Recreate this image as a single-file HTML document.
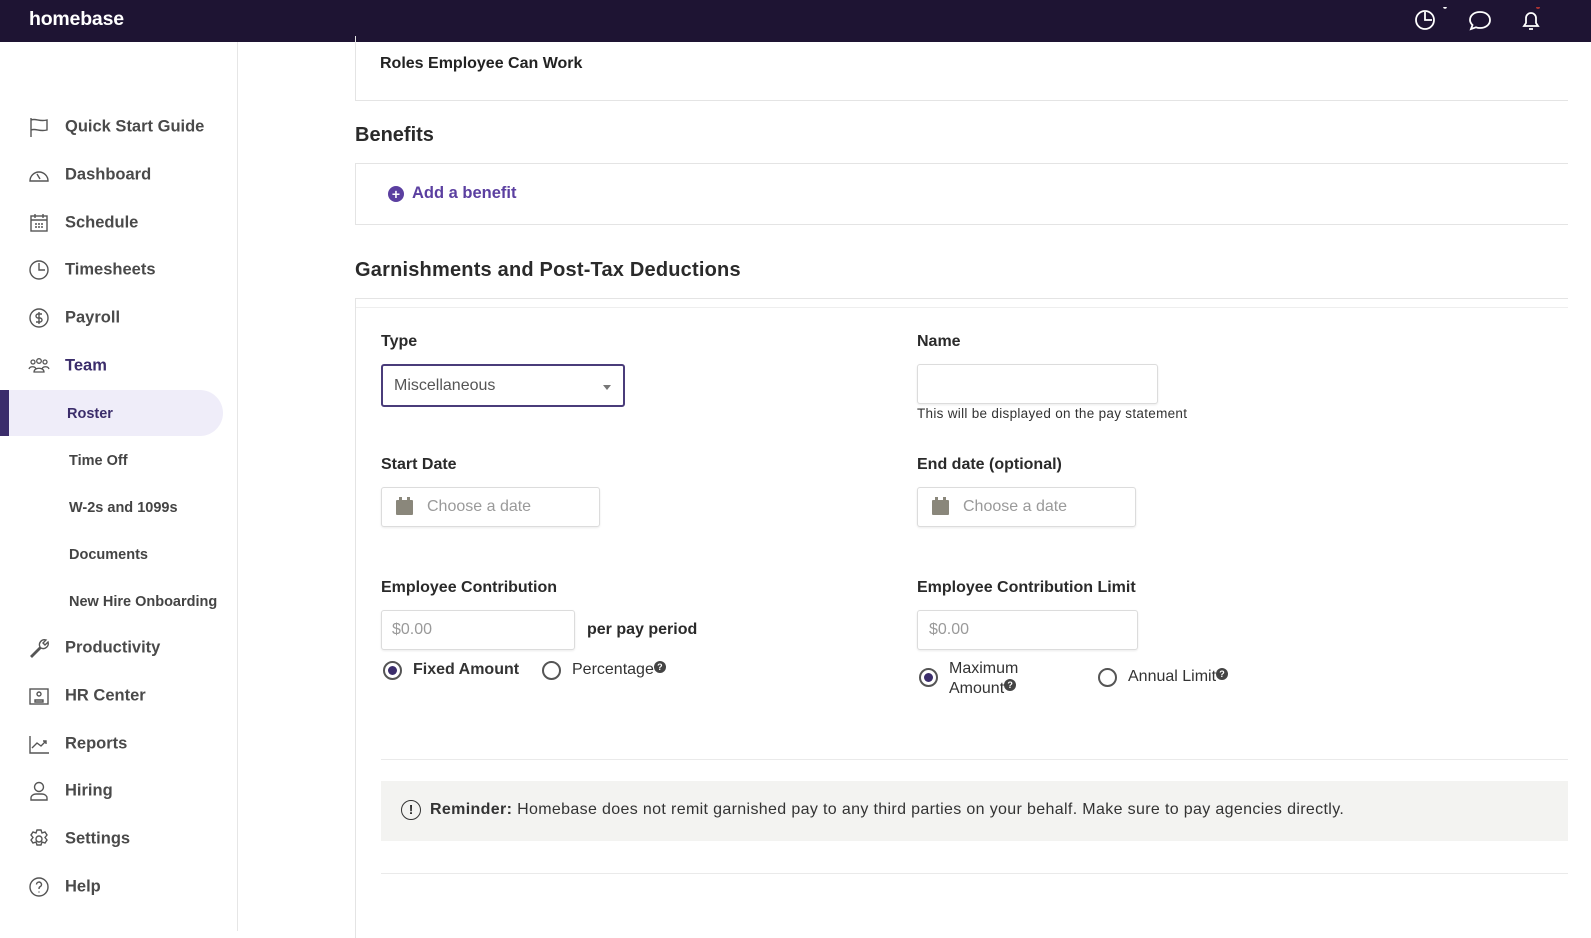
<!DOCTYPE html>
<html><head><meta charset="utf-8"><style>
*{box-sizing:border-box;margin:0;padding:0}
body{width:1591px;height:931px;overflow:hidden;background:#fff;font-family:"Liberation Sans",sans-serif;color:#222;position:relative}
.abs{position:absolute}
.top{left:0;top:0;width:1591px;height:42px;background:#1e1433}
.logo{left:29px;top:8px;color:#fff;font-size:19.5px;font-weight:bold;letter-spacing:-0.2px}
.side{left:0;top:42px;width:238px;height:889px;border-right:1px solid #e6e6e6}
.nav{left:65px;font-size:16.5px;font-weight:bold;color:#4a4a4a;transform:translateY(-50%)}
.ic{left:28px;width:22px;height:22px;transform:translateY(-50%)}
.sub{left:69px;font-size:14.5px;font-weight:bold;color:#444;transform:translateY(-50%)}
.lbl{font-size:16px;font-weight:bold;color:#2a2a2a}
.inp{border:1px solid #dcdcdc;border-radius:3px;background:#fff;box-shadow:0 1px 2px rgba(0,0,0,.08)}
.ph{color:#9a9a9a;font-size:16px}
.radio{width:19px;height:19px;border:2px solid #555;border-radius:50%;background:#fff}
.radio.on::after{content:"";position:absolute;left:3px;top:3px;width:9px;height:9px;border-radius:50%;background:#3b2d6b}
.q{display:inline-block;width:12px;height:12px;border-radius:50%;background:#444;color:#fff;font-size:9px;text-align:center;line-height:12px;vertical-align:top;font-weight:bold;letter-spacing:0}
.cal{width:17px;height:18px}
</style></head><body>
<div class="abs top"></div>
<div class="abs logo">homebase</div>
<svg class="abs" style="left:1413px;top:7px" width="130" height="28" viewBox="0 0 130 28" fill="none" stroke="#fff" stroke-width="1.8">
<circle cx="12" cy="13" r="9"/><path d="M12 5v8h7"/><circle cx="32" cy="0" r="1.8" fill="#fff" stroke="none"/>
<path d="M67 5c6 0 10 3.5 10 8s-4 8-10 8c-1.5 0-3-.3-4-.7L58 22l1.5-4c-1.5-1.4-2.5-3-2.5-5 0-4.5 4-8 10-8z"/>
<path d="M111 19h14l-2-3v-5a5 5 0 0 0-10 0v5zM116 22h4"/><circle cx="125" cy="0" r="2" fill="#a33" stroke="none"/>
</svg>
<div class="abs side"></div>
<div class="abs" style="left:0;top:390px;width:223px;height:46px;background:#efedf9;border-radius:0 23px 23px 0"></div>
<div class="abs" style="left:0;top:390px;width:9px;height:46px;background:#3b2d6b"></div>

<svg class="abs ic" style="top:127px" viewBox="0 0 22 22" fill="none" stroke="#555" stroke-width="1.4"><path d="M3 2v19M3 4c5-2 8 2 16 0v10c-8 2-11-2-16 0"/></svg>
<svg class="abs ic" style="top:175px" viewBox="0 0 22 22" fill="none" stroke="#555" stroke-width="1.4"><path d="M2 17a9 9 0 1 1 18 0zM9 10l3 5"/></svg>
<svg class="abs ic" style="top:223px" viewBox="0 0 22 22" fill="none" stroke="#555" stroke-width="1.4"><rect x="3" y="4" width="16" height="15"/><path d="M3 8h16M7 2v4M15 2v4M7 12h2M10 12h2M13 12h2M7 15h2M10 15h2M13 15h2"/></svg>
<svg class="abs ic" style="top:270px" viewBox="0 0 22 22" fill="none" stroke="#555" stroke-width="1.4"><circle cx="11" cy="11" r="9"/><path d="M11 4v7h6"/></svg>
<svg class="abs ic" style="top:318px" viewBox="0 0 22 22" fill="none" stroke="#555" stroke-width="1.4"><circle cx="11" cy="11" r="9"/><path d="M14 7h-4a2 2 0 0 0 0 4h2a2 2 0 0 1 0 4H8M11 5v12"/></svg>
<svg class="abs ic" style="top:366px" viewBox="0 0 22 22" fill="none" stroke="#555" stroke-width="1.3"><circle cx="5" cy="7" r="2"/><circle cx="11" cy="6" r="2.3"/><circle cx="17" cy="7" r="2"/><path d="M1 14c1-3 6-3 7 0M6 17c0-5 10-5 10 0zM14 14c1-3 6-3 7 0"/></svg>
<svg class="abs ic" style="top:648px" viewBox="0 0 22 22" fill="none" stroke="#555" stroke-width="1.4"><path d="M3 19l9-9a5 5 0 0 1 6-7l-3 3 2 2 3-3a5 5 0 0 1-7 6l-9 9z"/></svg>
<svg class="abs ic" style="top:696px" viewBox="0 0 22 22" fill="none" stroke="#555" stroke-width="1.4"><rect x="2" y="4" width="18" height="15"/><circle cx="11" cy="9" r="2"/><path d="M7 15h8v2H7z"/></svg>
<svg class="abs ic" style="top:744px" viewBox="0 0 22 22" fill="none" stroke="#555" stroke-width="1.4"><path d="M2 3v17h19M4 15l5-5 4 3 5-5M15 8h3v3"/></svg>
<svg class="abs ic" style="top:791px" viewBox="0 0 22 22" fill="none" stroke="#555" stroke-width="1.4"><circle cx="11" cy="7" r="4.5"/><path d="M3 20v-2c0-2 2-4 5-4h6c3 0 5 2 5 4v2z"/></svg>
<svg class="abs ic" style="top:839px" viewBox="0 0 22 22" fill="none" stroke="#555" stroke-width="1.4"><circle cx="11" cy="11" r="3"/><path d="M9 2h4l1 3 3-1 2 3-2 2.5 2 2.5-2 3-3-1-1 3H9l-1-3-3 1-2-3 2-2.5L3 7l2-3 3 1z"/></svg>
<svg class="abs ic" style="top:887px" viewBox="0 0 22 22" fill="none" stroke="#555" stroke-width="1.4"><circle cx="11" cy="11" r="9"/><path d="M8.5 8.5a2.5 2.5 0 1 1 3.5 2.3c-1 .5-1 1-1 2.2M11 15.5v1"/></svg>

<div class="abs nav" style="top:127px">Quick Start Guide</div>
<div class="abs nav" style="top:175px">Dashboard</div>
<div class="abs nav" style="top:223px">Schedule</div>
<div class="abs nav" style="top:270px">Timesheets</div>
<div class="abs nav" style="top:318px">Payroll</div>
<div class="abs nav" style="top:366px;color:#3b2d6b">Team</div>
<div class="abs sub" style="top:414px;left:67px;color:#3b2d6b">Roster</div>
<div class="abs sub" style="top:461px">Time Off</div>
<div class="abs sub" style="top:508px">W-2s and 1099s</div>
<div class="abs sub" style="top:555px">Documents</div>
<div class="abs sub" style="top:602px">New Hire Onboarding</div>
<div class="abs nav" style="top:648px">Productivity</div>
<div class="abs nav" style="top:696px">HR Center</div>
<div class="abs nav" style="top:744px">Reports</div>
<div class="abs nav" style="top:791px">Hiring</div>
<div class="abs nav" style="top:839px">Settings</div>
<div class="abs nav" style="top:887px">Help</div>

<!-- content -->
<div class="abs" style="left:355px;top:36px;width:1236px;height:65px;border:1px solid #e4e4e4;border-top:none;border-right:none"></div>
<div class="abs" style="left:380px;top:55px;font-size:16px;font-weight:bold">Roles Employee Can Work</div>
<div class="abs" style="left:355px;top:124px;font-size:20px;font-weight:bold;color:#2a2a2a">Benefits</div>
<div class="abs" style="left:355px;top:163px;width:1236px;height:62px;border:1px solid #e4e4e4;border-right:none"></div>
<div class="abs" style="left:388px;top:186px;width:16px;height:16px;border-radius:50%;background:#5b3fa0;color:#fff;font-size:14px;line-height:16px;text-align:center;font-weight:bold">+</div>
<div class="abs" style="left:412px;top:184px;font-size:16.5px;font-weight:bold;color:#5b3fa0">Add a benefit</div>
<div class="abs" style="left:355px;top:259px;font-size:20px;font-weight:bold;color:#2a2a2a;letter-spacing:0.2px">Garnishments and Post-Tax Deductions</div>
<div class="abs" style="left:355px;top:298px;width:1236px;height:640px;border:1px solid #e4e4e4;border-bottom:none;border-right:none"></div>
<div class="abs" style="left:356px;top:307px;width:1235px;height:1px;background:#eee"></div>
<div class="abs" style="left:1568px;top:42px;width:23px;height:889px;background:#fff"></div>

<div class="abs lbl" style="left:381px;top:333px">Type</div>
<div class="abs" style="left:381px;top:364px;width:244px;height:43px;border:2px solid #4a3c7a;border-radius:3px"></div>
<div class="abs ph" style="left:394px;top:377px;color:#555">Miscellaneous</div>
<div class="abs" style="left:603px;top:385px;border:4px solid transparent;border-top:5px solid #777"></div>

<div class="abs lbl" style="left:917px;top:333px">Name</div>
<div class="abs inp" style="left:917px;top:364px;width:241px;height:40px"></div>
<div class="abs" style="left:917px;top:406px;font-size:13.5px;color:#333;letter-spacing:0.3px">This will be displayed on the pay statement</div>

<div class="abs lbl" style="left:381px;top:456px">Start Date</div>
<div class="abs inp" style="left:381px;top:487px;width:219px;height:40px"></div>
<svg class="abs cal" style="left:396px;top:497px" viewBox="0 0 17 18"><rect x="0" y="3" width="17" height="15" rx="1" fill="#8a877b"/><rect x="3" y="0" width="3" height="5" fill="#8a877b"/><rect x="11" y="0" width="3" height="5" fill="#8a877b"/></svg>
<div class="abs ph" style="left:427px;top:498px">Choose a date</div>
<div class="abs lbl" style="left:917px;top:456px">End date (optional)</div>
<div class="abs inp" style="left:917px;top:487px;width:219px;height:40px"></div>
<svg class="abs cal" style="left:932px;top:497px" viewBox="0 0 17 18"><rect x="0" y="3" width="17" height="15" rx="1" fill="#8a877b"/><rect x="3" y="0" width="3" height="5" fill="#8a877b"/><rect x="11" y="0" width="3" height="5" fill="#8a877b"/></svg>
<div class="abs ph" style="left:963px;top:498px">Choose a date</div>

<div class="abs lbl" style="left:381px;top:579px">Employee Contribution</div>
<div class="abs inp" style="left:381px;top:610px;width:194px;height:40px"></div>
<div class="abs ph" style="left:392px;top:621px">$0.00</div>
<div class="abs lbl" style="left:587px;top:621px">per pay period</div>
<div class="abs radio on" style="left:383px;top:661px"></div>
<div class="abs" style="left:413px;top:661px;font-size:16px;font-weight:bold;color:#333">Fixed Amount</div>
<div class="abs radio" style="left:542px;top:661px"></div>
<div class="abs" style="left:572px;top:661px;font-size:16px;color:#333">Percentage<span class="q">?</span></div>

<div class="abs lbl" style="left:917px;top:579px">Employee Contribution Limit</div>
<div class="abs inp" style="left:917px;top:610px;width:221px;height:40px"></div>
<div class="abs ph" style="left:929px;top:621px">$0.00</div>
<div class="abs radio on" style="left:919px;top:668px"></div>
<div class="abs" style="left:949px;top:659px;font-size:16px;color:#333;line-height:20px">Maximum<br>Amount<span class="q">?</span></div>
<div class="abs radio" style="left:1098px;top:668px"></div>
<div class="abs" style="left:1128px;top:668px;font-size:16px;color:#333">Annual Limit<span class="q">?</span></div>

<div class="abs" style="left:381px;top:759px;width:1187px;height:1px;background:#eaeaea"></div>
<div class="abs" style="left:381px;top:781px;width:1187px;height:60px;background:#f3f3f1"></div>
<div class="abs" style="left:401px;top:800px;width:20px;height:20px;border:1.5px solid #333;border-radius:50%;text-align:center;font-size:13px;line-height:17px;font-weight:bold">!</div>
<div class="abs" style="left:430px;top:801px;font-size:16px;color:#333;letter-spacing:0.35px"><b>Reminder:</b> Homebase does not remit garnished pay to any third parties on your behalf. Make sure to pay agencies directly.</div>
<div class="abs" style="left:381px;top:873px;width:1187px;height:1px;background:#eaeaea"></div>
</body></html>
